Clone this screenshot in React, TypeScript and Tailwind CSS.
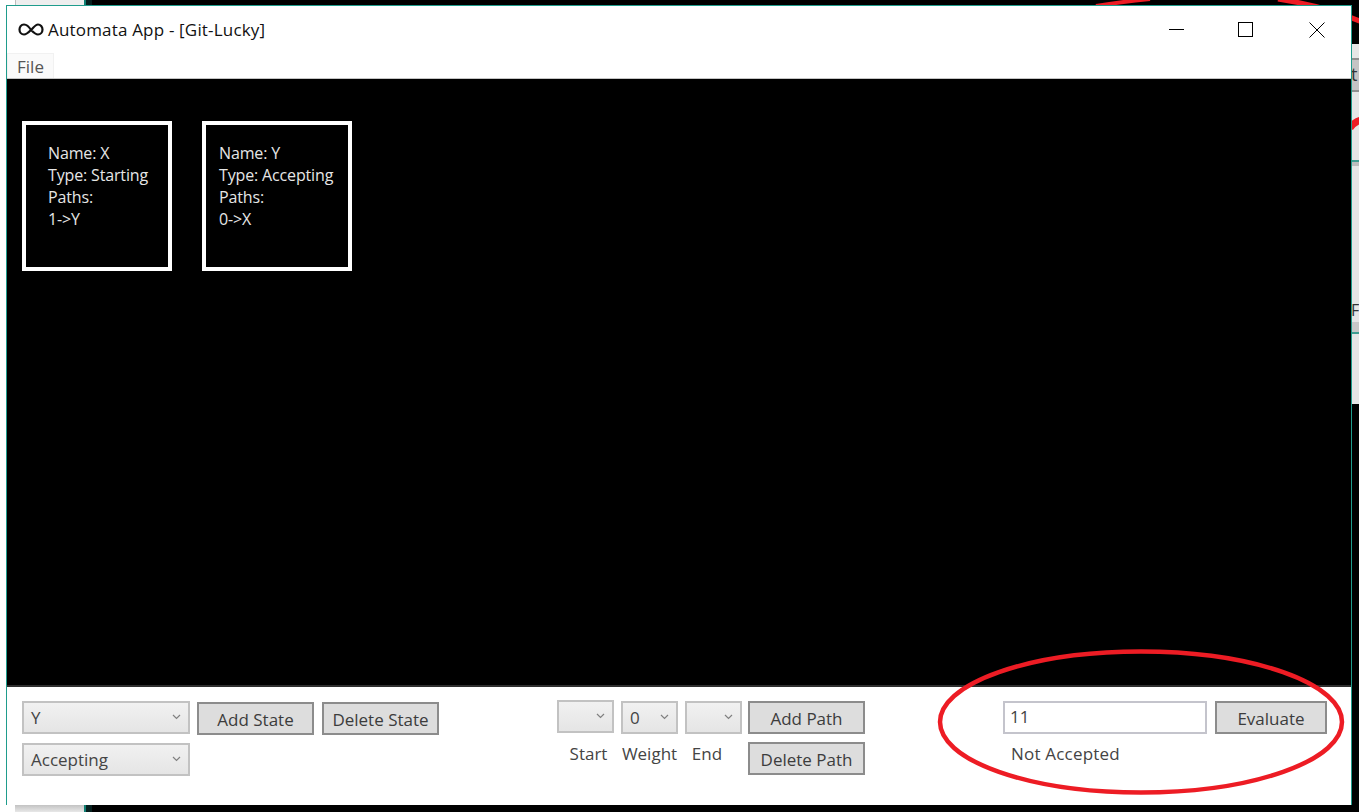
import React from "react";

const Chevron = () => (
  <svg width="9" height="6" viewBox="0 0 9 6" className="mb-[2px] shrink-0">
    <path d="M1 1 L4.5 4.5 L8 1" fill="none" stroke="#808080" strokeWidth="1.2" />
  </svg>
);

const Select = ({ value, className }: { value?: string; className: string }) => (
  <div className={`flex items-center justify-between border-2 border-[#c2c2c2] bg-gradient-to-b from-[#f1f1f1] to-[#e5e5e5] pl-[7px] pr-[7px] text-[#444444] ${className}`}>
    <span>{value}</span>
    <Chevron />
  </div>
);

const Btn = ({ label, className }: { label: string; className: string }) => (
  <div className={`flex items-center justify-center border-2 border-[#8c8c8c] bg-[#dddddd] text-[#3c3c3c] ${className}`}>{label}</div>
);

const StateCard = ({ lines, className }: { lines: string[]; className?: string }) => (
  <div className={`h-[150px] w-[150px] border-4 border-white pl-[22px] pt-[17px] text-[16px] tracking-[-0.15px] text-[#e6e6e6] ${className ?? ""}`}>
    {lines.map((l) => (
      <div key={l} className="h-[22px] leading-[22px]">{l}</div>
    ))}
  </div>
);

export default function App() {
  return (
    <div className="relative h-[812px] w-[1359px] overflow-hidden bg-black font-['Open_Sans','Noto_Sans',sans-serif] text-[17px]">
      {/* desktop behind the window */}
      <div className="absolute inset-y-0 left-0 flex w-[92px]">
        <div className="w-[15px] bg-white" />
        <div className="w-px bg-[#bdbdbd]" />
        <div className="flex-1 bg-[#eeeeee]" />
        <div className="w-[2px] bg-[#0f7f73]" />
        <div className="w-[6px] bg-[#06201f]" />
      </div>
      <div className="absolute bottom-0 left-0 h-[8px] w-[84px] bg-gradient-to-b from-[#bdbdbd] to-[#e8e8e8]" />
      <div className="absolute bottom-0 left-0 h-[8px] w-[15px] bg-white" />

      <div className="absolute right-0 top-[44px] flex h-[360px] w-[8px] flex-col overflow-hidden bg-[#e6e6e6] text-[#333333]">
        <div className="h-[14px]" />
        <div className="h-[2px] bg-[#8f8f8f]" />
        <div className="h-[30px] bg-[#c4c4c4] text-[18px] leading-[28px]">t</div>
        <div className="h-[2px] bg-[#8f8f8f]" />
        <div className="h-[68px]" />
        <div className="h-[2px] bg-[#3f9c90]" />
        <div className="h-[4px] bg-[#bdbdbd]" />
        <div className="h-[132px]" />
        <div className="h-[24px] text-[16px] leading-[24px]">F/</div>
        <div className="h-[10px] bg-[#c8c8c8]" />
        <div className="h-[2px] bg-[#3f9c90]" />
      </div>

      <svg className="absolute inset-0" width="1359" height="812" fill="none">
        <path d="M1096 6 Q1120 2 1150 -1" stroke="#ed1c24" strokeWidth="4" />
        <path d="M1278 -1 Q1325 6 1362 22" stroke="#ed1c24" strokeWidth="5" />
        <path d="M1350 128 Q1355 121 1362 120" stroke="#ed1c24" strokeWidth="7" />
      </svg>

      {/* window */}
      <div className="absolute left-[6px] top-[5px] flex h-[800px] w-[1346px] flex-col border border-b-0 border-[#1f9c8c] bg-white">
        <div className="flex h-[47px] shrink-0 items-center">
          <svg width="26" height="16" viewBox="0 0 26 16" className="ml-[11px]" fill="none">
            <path d="M13 8 C10 3 8 2.5 6 2.5 C3 2.5 1.5 5 1.5 7.5 C1.5 10.5 3.5 12.5 6 12.5 C8.5 12.5 10 11 13 8 C16 5 17.5 2.5 20 2.5 C22.5 2.5 24.5 5 24.5 7.5 C24.5 10.5 22.5 12.5 20 12.5 C17.5 12.5 16 11 13 8 Z" stroke="#111111" strokeWidth="2.2" />
          </svg>
          <span className="ml-[4px] text-[17px] tracking-[0.18px] text-[#111111]">Automata App - [Git-Lucky]</span>
          <div className="ml-auto flex items-center">
            <svg width="16" height="16" viewBox="0 0 16 16" fill="none">
              <path d="M0 7.5 H15" stroke="#000" />
            </svg>
            <svg width="16" height="16" viewBox="0 0 16 16" className="ml-[53px]" fill="none">
              <rect x="0.5" y="0.5" width="14" height="14" stroke="#000" />
            </svg>
            <svg width="16" height="16" viewBox="0 0 16 16" className="ml-[55px] mr-[26px]" fill="none">
              <path d="M0.5 0.5 L15.5 15.5 M15.5 0.5 L0.5 15.5" stroke="#000" />
            </svg>
          </div>
        </div>
        <div className="flex h-[26px] shrink-0 border-b border-[#c4c4c4]">
          <div className="flex w-[47px] items-center justify-center border-x border-t border-[#f1f1f1] bg-[#fafafa] pt-[2px] text-[#555555]">File</div>
        </div>
        <div className="flex h-[608px] shrink-0 items-start gap-[30px] border-b-2 border-[#2e2e2e] bg-black pl-[15px] pt-[42px]">
          <StateCard lines={["Name: X", "Type: Starting", "Paths:", "1->Y"]} />
          <StateCard className="!pl-[13px]" lines={["Name: Y", "Type: Accepting", "Paths:", "0->X"]} />
        </div>
        <div className="flex flex-1 items-start pl-[15px] pt-[14px]">
          <div className="flex flex-col gap-[8px]">
            <div className="flex items-start">
              <Select value="Y" className="h-[33px] w-[168px]" />
              <Btn label="Add State" className="ml-[7px] mt-px h-[33px] w-[117px] pt-[2px]" />
              <Btn label="Delete State" className="ml-[8px] mt-px h-[33px] w-[117px] pt-[2px]" />
            </div>
            <Select value="Accepting" className="h-[33px] w-[168px]" />
          </div>
          <div className="ml-[118px] grid grid-cols-[57px_57px_57px] gap-x-[7px] gap-y-[7px] text-center text-[#444444]">
            <Select className="-mt-px h-[33px]" />
            <Select value="0" className="h-[33px] text-left" />
            <Select className="h-[33px]" />
            <span className="ml-[6px]">Start</span>
            <span>Weight</span>
            <span className="-ml-[13px]">End</span>
          </div>
          <div className="ml-[6px] flex flex-col gap-[8px]">
            <Btn label="Add Path" className="h-[33px] w-[117px] pt-[2px]" />
            <Btn label="Delete Path" className="h-[33px] w-[117px] pt-[2px]" />
          </div>
          <div className="ml-[138px] flex flex-col">
            <div className="flex gap-[8px]">
              <div className="flex h-[33px] w-[204px] items-center border-2 border-[#c4c4cc] pb-[2px] pl-[5px] text-[#444444]">11</div>
              <Btn label="Evaluate" className="h-[33px] w-[112px] pt-[2px]" />
            </div>
            <span className="ml-[8px] mt-[7px] tracking-[0.2px] text-[#444444]">Not Accepted</span>
          </div>
        </div>
      </div>

      {/* annotation drawn over the window */}
      <svg className="pointer-events-none absolute inset-0" width="1359" height="812" fill="none">
        <ellipse cx="1141" cy="722" rx="201" ry="70.5" stroke="#ed1c24" strokeWidth="4.5" />
      </svg>
    </div>
  );
}
